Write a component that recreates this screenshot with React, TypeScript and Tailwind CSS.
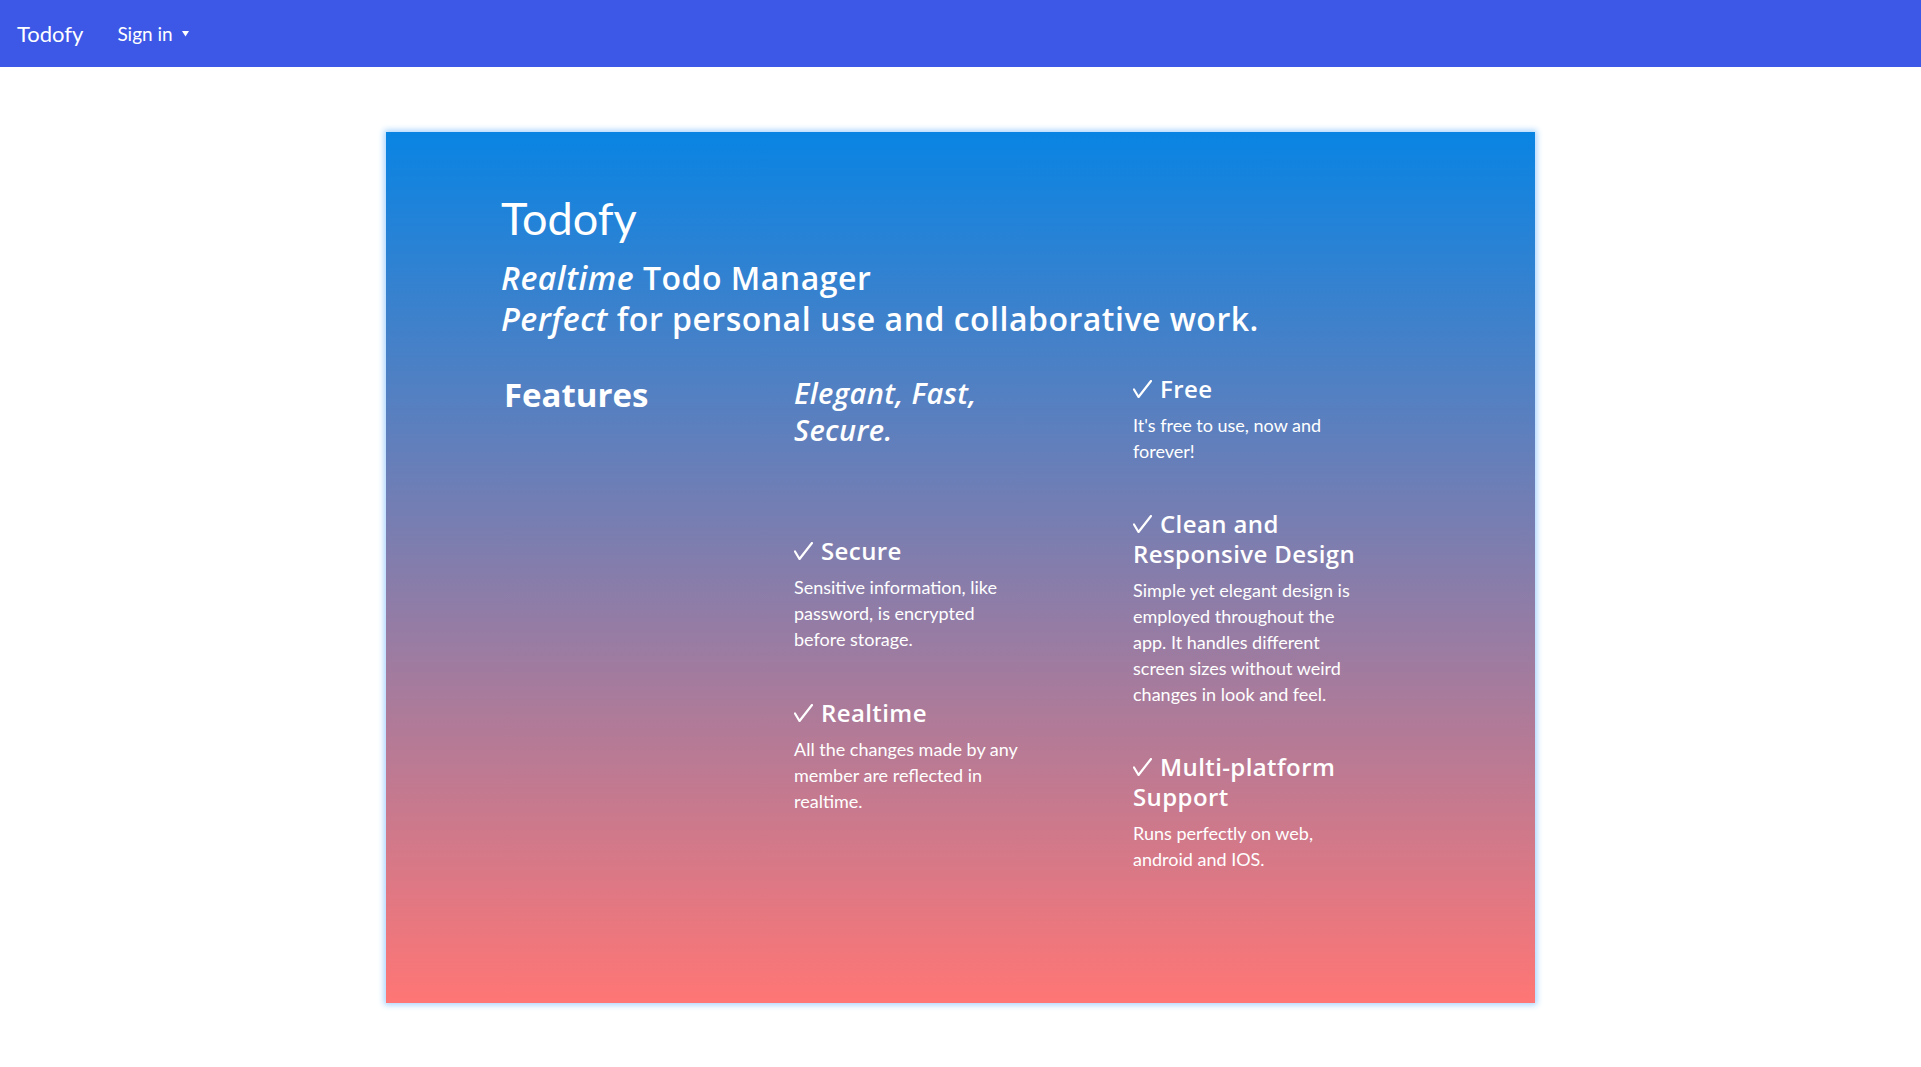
import React from "react";

const OPEN = { fontFamily: "'Open Sans', Lato, sans-serif" } as const;

function Check() {
  return (
    <svg width="19" height="18" viewBox="0 0 19 18" className="inline-block shrink-0" fill="none">
      <path d="M1 9.5 L5.5 17 L18 1" stroke="white" strokeWidth="2.2" strokeLinecap="round" strokeLinejoin="round" />
    </svg>
  );
}

function Feature({ title, lines, className = "" }: { title: string[]; lines: string[]; className?: string }) {
  return (
    <div className={className}>
      <h3 className="text-[24px] leading-[30px] font-semibold tracking-[0.4px]" style={OPEN}>
        {title.map((t, i) => (
          <div key={i} className="whitespace-nowrap flex items-center">
            {i === 0 && (
              <span className="mr-[8px] flex items-center">
                <Check />
              </span>
            )}
            <span>{t}</span>
          </div>
        ))}
      </h3>
      <p className="mt-[8px] text-[18px] leading-[26px]">
        {lines.map((l, i) => (
          <span key={i} className="block whitespace-nowrap">
            {l}
          </span>
        ))}
      </p>
    </div>
  );
}

export default function App() {
  return (
    <div className="min-h-[1067px] bg-white text-white" style={{ fontFamily: "Lato, 'Open Sans', sans-serif" }}>
      <nav className="h-[67px] bg-[#3d58e7] flex items-center pl-[17px]">
        <span className="text-[22px] leading-none">Todofy</span>
        <button className="ml-[34px] flex items-center text-[19px] leading-none text-white">
          Sign in
          <svg width="7" height="6" viewBox="0 0 7 6" className="ml-[9px] mt-[1px]">
            <path d="M0 0 H7 L3.5 5.5 Z" fill="white" />
          </svg>
        </button>
      </nav>
      <main className="pt-[65px] pb-[64px]">
        <section className="mx-auto w-[1149px] h-[871px] bg-[linear-gradient(to_bottom,#0984e3,#ff7675)] shadow-[0_0_6px_2px_#a9d4ff] pl-[115px] pt-[60px]">
          <h1 className="text-[45px] leading-[53px] font-normal">Todofy</h1>
          <h2 className="mt-[12px] text-[32px] leading-[41px] font-semibold tracking-[0.5px]" style={OPEN}>
            <div>
              <em>Realtime</em> Todo Manager
            </div>
            <div>
              <em>Perfect</em> for personal use and collaborative work.
            </div>
          </h2>
          <div className="mt-[35px] flex">
            <div className="w-[293px] pl-[3px]">
              <h2 className="text-[33px] leading-[41px] font-bold" style={OPEN}>
                Features
              </h2>
            </div>
            <div className="w-[339px] flex flex-col">
              <h3 className="text-[29px] leading-[37px] font-semibold italic tracking-[0.4px]" style={OPEN}>
                Elegant, Fast,
                <br />
                Secure.
              </h3>
              <Feature
                className="mt-[88px]"
                title={["Secure"]}
                lines={["Sensitive information, like", "password, is encrypted", "before storage."]}
              />
              <Feature
                className="mt-[46px]"
                title={["Realtime"]}
                lines={["All the changes made by any", "member are reflected in", "realtime."]}
              />
            </div>
            <div className="w-[260px] flex flex-col">
              <Feature title={["Free"]} lines={["It's free to use, now and", "forever!"]} />
              <Feature
                className="mt-[45px]"
                title={["Clean and", "Responsive Design"]}
                lines={[
                  "Simple yet elegant design is",
                  "employed throughout the",
                  "app. It handles different",
                  "screen sizes without weird",
                  "changes in look and feel.",
                ]}
              />
              <Feature
                className="mt-[45px]"
                title={["Multi-platform", "Support"]}
                lines={["Runs perfectly on web,", "android and IOS."]}
              />
            </div>
          </div>
        </section>
      </main>
    </div>
  );
}
